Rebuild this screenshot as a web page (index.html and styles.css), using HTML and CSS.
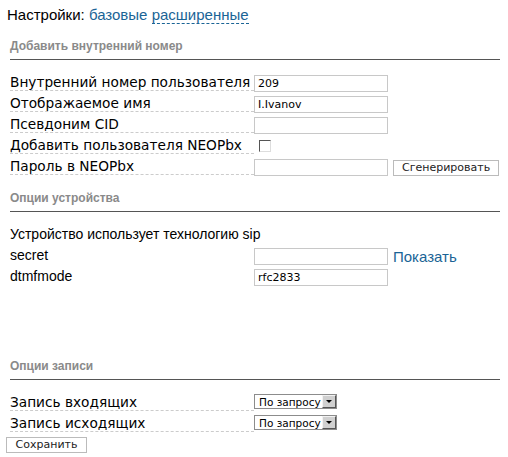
FILE: index.html
```html
<!DOCTYPE html>
<html lang="ru">
	<head>
		<meta charset="utf-8">
		<title>Настройки</title>
		<link rel="stylesheet" href="styles.css">
	</head>
	<body>
		<div class="modes">
			Настройки:
			<a class="mode" href="#">базовые</a>
			<a class="mode current" href="#">расширенные</a>
		</div>

		<h3 class="section-title">Добавить внутренний номер</h3>
		<div class="form">
			<div class="row">
				<span class="label">Внутренний номер пользователя</span>
				<input class="field" type="text" value="209">
			</div>
			<div class="row">
				<span class="label">Отображаемое имя</span>
				<input class="field" type="text" value="I.Ivanov">
			</div>
			<div class="row">
				<span class="label">Псевдоним CID</span>
				<input class="field" type="text" value="">
			</div>
			<div class="row">
				<span class="label">Добавить пользователя NEOPbx</span>
				<span class="check"></span>
			</div>
			<div class="row">
				<span class="label">Пароль в NEOPbx</span>
				<input class="field" type="text" value="">
				<button class="btn">Сгенерировать</button>
			</div>
		</div>

		<h3 class="section-title">Опции устройства</h3>
		<div class="form">
			<div class="row plain">Устройство использует технологию sip</div>
			<div class="row">
				<span class="label plain">secret</span>
				<input class="field" type="text" value="">
				<a class="show" href="#">Показать</a>
			</div>
			<div class="row">
				<span class="label plain">dtmfmode</span>
				<input class="field" type="text" value="rfc2833">
			</div>
		</div>

		<h3 class="section-title spaced">Опции записи</h3>
		<div class="form">
			<div class="row">
				<span class="label">Запись входящих</span>
				<span class="select">По запросу<span class="arrow"></span></span>
			</div>
			<div class="row">
				<span class="label">Запись исходящих</span>
				<span class="select">По запросу<span class="arrow"></span></span>
			</div>
		</div>
		<button class="btn save">Сохранить</button>
	</body>
</html>
```

FILE: styles.css
```css
body {
	margin: 0;
	color: #000;
	background-color: #fff;
	font-family: "Liberation Sans", Arial, sans-serif;
	font-size: 14px;
}
a { color: #1a6496; text-decoration: none; }

.modes {
	padding: 6px 7px 0;
	font-size: 15px;
	line-height: 18px;
}
.mode.current {
	border-bottom: 1px dashed #1a6496;
}

.section-title {
	margin: 15px 8px 0 10px;
	padding-bottom: 6px;
	font-size: 12px;
	line-height: 14px;
	color: #8a8a8a;
	border-bottom: 1px solid #555;
}
.section-title.spaced {
	margin-top: 73px;
}

.form {
	padding: 11px 0 0 10px;
}
.row {
	display: flex;
	align-items: flex-end;
	height: 21px;
}
.label {
	width: 244px;
	font-family: "DejaVu Sans", Verdana, sans-serif;
	font-size: 13.7px;
	line-height: 16px;
	white-space: nowrap;
	border-bottom: 1px dashed #ccc;
	margin-bottom: 1px;
}
.label.plain {
	font-family: "Liberation Sans", Arial, sans-serif;
	font-size: 14px;
	border-bottom: 0;
	margin-bottom: 2px;
}
.row.plain {
	align-items: center;
}

.field {
	box-sizing: border-box;
	width: 134px;
	height: 17px;
	margin: 0;
	padding: 0 3px;
	border: 1px solid #c8c8c8;
	font-family: "DejaVu Sans", Verdana, sans-serif;
	font-size: 11px;
	color: #000;
}
.check {
	box-sizing: border-box;
	width: 12px;
	height: 12px;
	margin: 0 0 3px 5px;
	border: 1px solid;
	border-color: #555 #ddd #ddd #555;
	background: #fff;
}
.btn {
	box-sizing: border-box;
	height: 16px;
	margin: 0 0 0 5px;
	padding: 0 8px;
	background: #fff;
	border: 1px solid #bbb;
	font-family: "DejaVu Sans", Verdana, sans-serif;
	font-size: 11px;
	line-height: 14px;
	color: #222;
}
.show {
	margin-left: 5px;
	font-size: 15px;
	line-height: 17px;
}

.select {
	box-sizing: border-box;
	display: flex;
	align-items: center;
	justify-content: space-between;
	width: 83px;
	height: 15px;
	margin-bottom: 3px;
	padding-left: 4px;
	border: 1px solid #8c8c8c;
	font-family: "DejaVu Sans", Verdana, sans-serif;
	font-size: 10.5px;
	white-space: nowrap;
}
.arrow {
	position: relative;
	flex: none;
	box-sizing: border-box;
	width: 14px;
	height: 13px;
	background: #d0d0d0;
	border: 1px solid;
	border-color: #f2f2f2 #555 #555 #f2f2f2;
}
.arrow::after {
	content: "";
	position: absolute;
	left: 3px;
	top: 4px;
	border-left: 3px solid transparent;
	border-right: 3px solid transparent;
	border-top: 3px solid #000;
}

.save {
	display: block;
	margin: 4px 0 0 6px;
	width: 81px;
	height: 16px;
}
```
